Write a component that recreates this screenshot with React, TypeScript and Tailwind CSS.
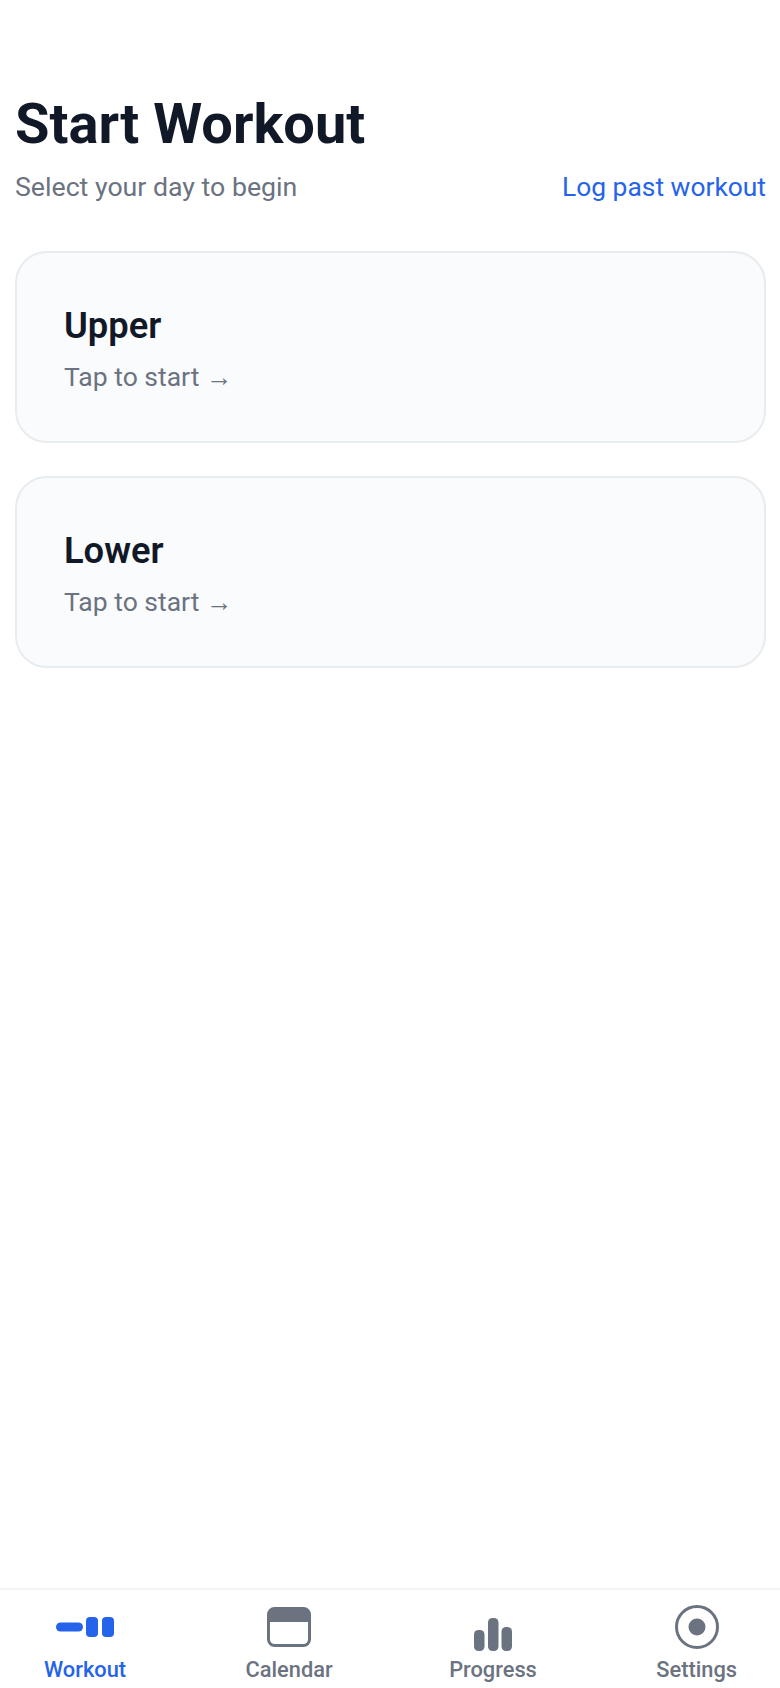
const font = "font-['Roboto',sans-serif]";

function DayCard({ name }: { name: string }) {
  return (
    <button className="flex h-[192px] w-full flex-col items-start justify-start rounded-[32px] border-2 border-[#e9ecef] bg-[#fafbfc] pt-[51px] pl-[47px] text-left">
      <div className="text-[36.3px] leading-[44px] font-semibold text-[#111827]">{name}</div>
      <div className="mt-[9px] text-[26.5px] leading-[40px] text-[#6b7280]">Tap to start →</div>
    </button>
  );
}

function NavItem({ label, active, icon, bottom, className = "" }: { label: string; active?: boolean; icon: React.ReactNode; bottom?: boolean; className?: string }) {
  return (
    <div className={`flex flex-col items-center ${active ? "text-[#2563eb]" : "text-[#6b7280]"} ${className}`}>
      <div className={`flex h-[48px] ${bottom ? "items-end" : "items-center"} justify-center`}>{icon}</div>
      <span className="mt-[3px] text-[21.8px] leading-[32px] font-medium">{label}</span>
    </div>
  );
}

export default function App() {
  return (
    <div className={`${font} flex h-[1688px] w-[780px] flex-col overflow-hidden bg-white`}>
      <main className="flex-1 pt-[88px] pr-[14px] pl-[15px]">
        <h1 className="text-[56px] leading-[72px] font-bold text-[#111827]">Start Workout</h1>
        <div className="mt-[7px] flex items-center justify-between leading-[40px]">
          <span className="text-[26.7px] text-[#6b7280]">Select your day to begin</span>
          <a className="text-[26.4px] text-[#2563eb]">Log past workout</a>
        </div>
        <div className="mt-[44px] flex flex-col gap-[33px]">
          <DayCard name="Upper" />
          <DayCard name="Lower" />
        </div>
      </main>
      <nav className="flex h-[100px] items-start justify-between border-t-2 border-[#f3f4f6] bg-white pt-[13px] pr-[43px] pl-[44px]">
        <NavItem
          active
          label="Workout"
          icon={
            <svg width="58" height="20" viewBox="0 0 58 20" fill="currentColor">
              <rect x="0" y="5.5" width="27" height="9" rx="4.5" />
              <rect x="30" y="0" width="12" height="20" rx="4" />
              <rect x="46" y="0" width="12" height="20" rx="4" />
            </svg>
          }
        />
        <NavItem
          className="ml-[3px]"
          label="Calendar"
          icon={
            <svg width="44" height="40" viewBox="0 0 44 40">
              <rect x="1.5" y="1.5" width="41" height="37" rx="6" fill="none" stroke="currentColor" strokeWidth="3" />
              <path d="M1.5 15V7.5a6 6 0 0 1 6-6h29a6 6 0 0 1 6 6V15z" fill="currentColor" />
            </svg>
          }
        />
        <NavItem
          bottom
          className="mr-[3px]"
          label="Progress"
          icon={
            <svg width="38" height="33" viewBox="0 0 38 33" fill="currentColor">
              <rect x="0" y="12" width="10.5" height="21" rx="4.5" />
              <rect x="14" y="0" width="10.5" height="33" rx="4.5" />
              <rect x="27.5" y="9" width="10.5" height="24" rx="4.5" />
            </svg>
          }
        />
        <NavItem
          label="Settings"
          icon={
            <svg width="44" height="44" viewBox="0 0 44 44">
              <circle cx="22" cy="22" r="20.5" fill="none" stroke="currentColor" strokeWidth="3" />
              <circle cx="22" cy="22" r="8.5" fill="currentColor" />
            </svg>
          }
        />
      </nav>
    </div>
  );
}
